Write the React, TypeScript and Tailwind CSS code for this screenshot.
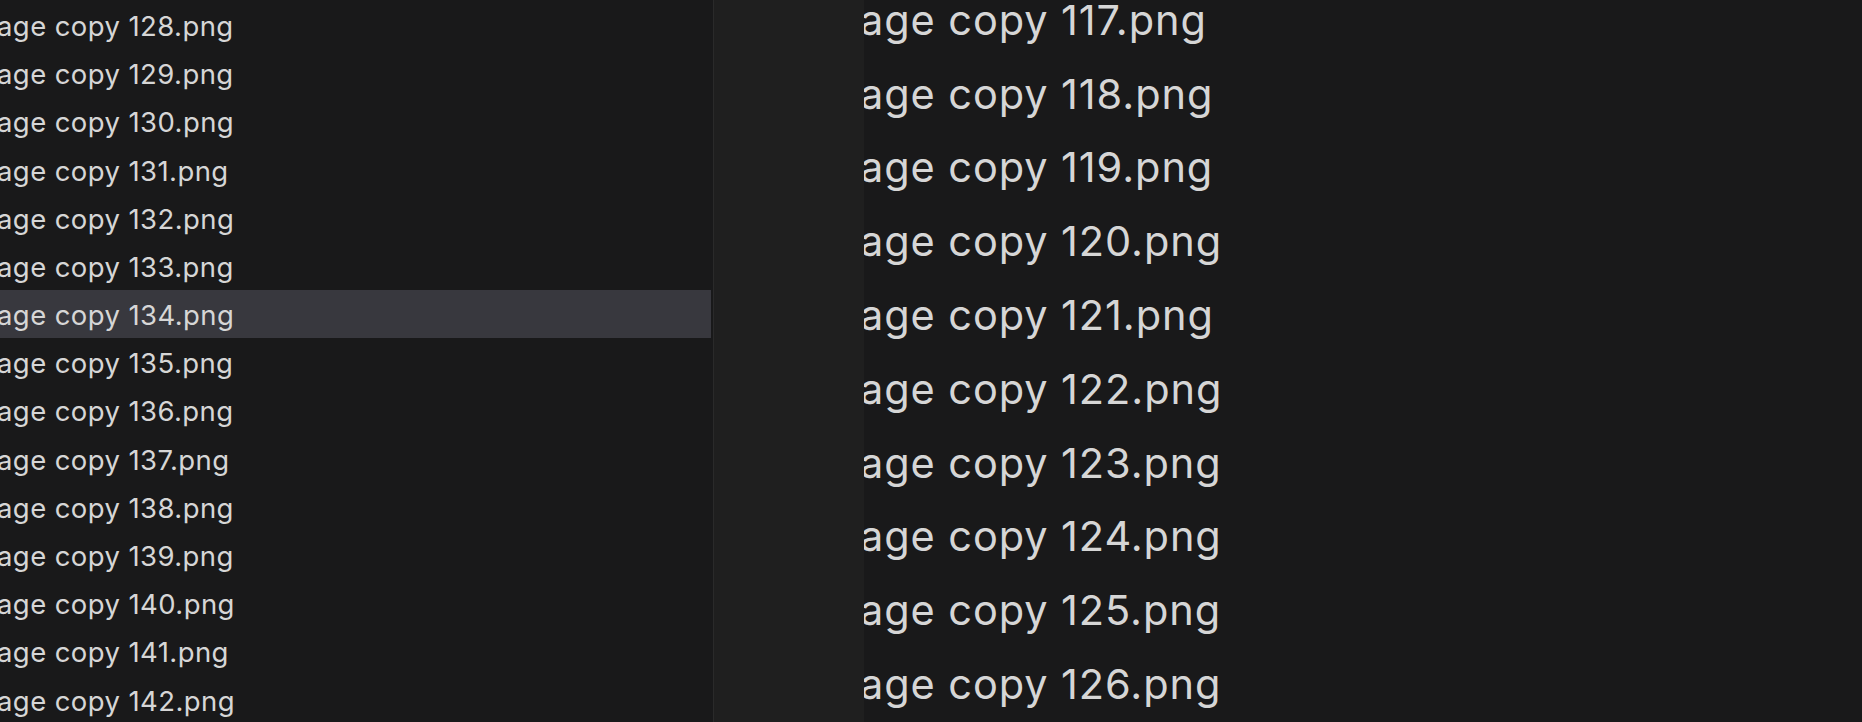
import React from "react";

const leftFiles = Array.from({ length: 15 }, (_, i) => 128 + i);
const rightFiles = Array.from({ length: 10 }, (_, i) => 117 + i);

export default function App() {
    return (
        <div
            className="w-[1862px] h-[722px] overflow-hidden flex bg-[#19191a] text-[#d6d6d6]"
            style={{ fontFamily: "Inter, 'Liberation Sans', sans-serif" }}
        >
            {/* File list */}
            <div className="w-[713px] shrink-0 flex flex-col overflow-hidden pt-[1px] pr-[2px]">
                {leftFiles.map((n) => (
                    <div
                        key={n}
                        className={`h-[48.2px] shrink-0 flex items-center overflow-hidden pt-[3px] text-[27.5px] tracking-[0.015em] whitespace-nowrap ${
                            n === 134 ? "bg-[#38383e]" : ""
                        }`}
                    >
                        <span className="-ml-[3px]">age copy {n}.png</span>
                    </div>
                ))}
            </div>

            {/* Gutter */}
            <div className="w-[151px] shrink-0 bg-[#1f1f1f] border-l border-[#2a2a2a]" />

            {/* Zoomed preview */}
            <div className="flex-1 flex flex-col overflow-hidden -mt-[17px]">
                {rightFiles.map((n) => (
                    <div
                        key={n}
                        className="h-[73.8px] shrink-0 flex items-center overflow-hidden text-[41.5px] tracking-[0.022em] whitespace-nowrap"
                    >
                        <span className="-ml-[4px]">age copy {n}.png</span>
                    </div>
                ))}
            </div>
        </div>
    );
}
